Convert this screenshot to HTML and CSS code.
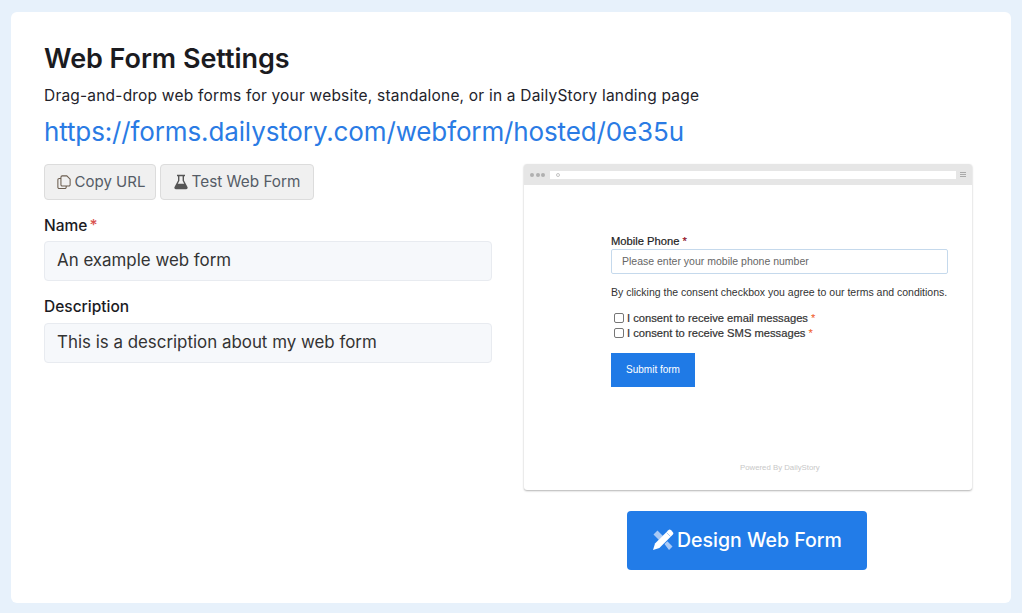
FILE: index.html
```html
<!DOCTYPE html>
<html lang="en">
<head>
<meta charset="utf-8">
<title>Web Form Settings</title>
<link rel="stylesheet" href="styles.css">
</head>
<body>
<main class="card">
  <h1 class="title">Web Form Settings</h1>
  <p class="subtitle">Drag-and-drop web forms for your website, standalone, or in a DailyStory landing page</p>
  <a class="url" href="#">https://forms.dailystory.com/webform/hosted/0e35u</a>
  <div class="columns">
    <section class="left">
      <div class="actions">
        <button class="btn btn-copy" type="button">
          <svg class="ico" viewBox="0 0 16 16" width="14" height="16"><path d="M6 1h5.200L15 4.800V11a1.500 1.500 0 0 1-1.500 1.500H6A1.500 1.500 0 0 1 4.500 11V2.500A1.500 1.500 0 0 1 6 1zM4.500 4H2.500A1.500 1.500 0 0 0 1 5.500V14a1.500 1.500 0 0 0 1.500 1.500H9A1.500 1.500 0 0 0 10.500 14v-1.500" fill="none" stroke="#6b5d4f" stroke-width="1.200"/></svg>
          Copy URL
        </button>
        <button class="btn btn-test" type="button">
          <svg class="ico" viewBox="0 0 14 16" width="14" height="16"><path d="M3 .8h8v1.400h-1v4.200l3.500 6.700c.5 1.100-.2 2.200-1.400 2.200H1.900C.7 15.300 0 14.200.5 13.100L4 6.400V2.200H3zM5.400 2.200v4.600L3.800 9.800h6.400L8.600 6.800V2.200z" fill="#555" fill-rule="evenodd"/></svg>
          Test Web Form
        </button>
      </div>
      <label class="field-label field-name">Name<span class="req">*</span></label>
      <input class="field" type="text" value="An example web form">
      <label class="field-label field-desc">Description</label>
      <input class="field" type="text" value="This is a description about my web form">
    </section>
    <section class="right">
      <div class="browser">
        <div class="chrome">
          <span class="dots"><i></i><i></i><i></i></span>
          <span class="address"><i class="ring"></i></span>
          <span class="menu"><i></i><i></i><i></i></span>
        </div>
        <div class="page">
          <div class="form">
            <div class="pf-label">Mobile Phone <span class="pf-req">*</span></div>
            <div class="pf-input">Please enter your mobile phone number</div>
            <p class="pf-text">By clicking the consent checkbox you agree to our terms and conditions.</p>
            <div class="pf-check"><span class="box"></span><span>I consent to receive email messages <span class="pf-star">*</span></span></div>
            <div class="pf-check"><span class="box"></span><span>I consent to receive SMS messages <span class="pf-star">*</span></span></div>
            <div class="pf-submit">Submit form</div>
          </div>
          <div class="powered">Powered By DailyStory</div>
        </div>
      </div>
      <button class="design" type="button">
        <svg viewBox="0 0 22 22" width="22" height="22">
          <path d="M1.500 5.500 5.500 1.500l5.500 5.500-4 4zM12.500 15l2.800-2.800 5.200 5.200-3.500 3.600z" fill="#a9c9f5"/>
          <path d="M16.300 1.300a2 2 0 0 1 2.800 0l1.600 1.600a2 2 0 0 1 0 2.800L7.400 19 1 21l2-6.400z" fill="#fff"/>
          <path d="M14.500 3.500l4 4" stroke="#a9c9f5" stroke-width="1"/>
        </svg>
        Design Web Form
      </button>
    </section>
  </div>
</main>
</body>
</html>
```
FILE: styles.css
```css
* { box-sizing: border-box; }
html, body { height: 100%; }
body {
  margin: 0;
  padding: 12px 11px 10px;
  background: #e7f1fb;
  font-family: Inter, "Noto Sans", sans-serif;
  overflow: hidden;
}
.card {
  height: 591px;
  background: #fff;
  border-radius: 6px;
  padding: 28px 39px 0 33px;
}
.title {
  margin: 0;
  font-size: 27px;
  line-height: 38px;
  font-weight: 600;
  color: #1b1b1f;
  letter-spacing: -.05px;
}
.subtitle {
  margin: 7px 0 0;
  font-size: 15.500px;
  line-height: 22px;
  letter-spacing: .2px;
  color: #23232b;
}
.url {
  display: block;
  margin-top: 6px;
  font-size: 26px;
  line-height: 38px;
  color: #2a7be4;
  text-decoration: none;
  letter-spacing: -.13px;
}
.columns { display: flex; gap: 32px; margin-top: 13px; }
.left, .right { width: 448px; }
.actions { display: flex; gap: 4px; }
.btn {
  display: flex;
  align-items: center;
  justify-content: center;
  gap: 4px;
  height: 36px;
  border: 1px solid #dcdcdc;
  border-radius: 4px;
  background: #f0f0f0;
  color: #555c66;
  font: 15.300px/34px Inter, "Noto Sans", sans-serif;
  padding: 0;
}
.btn-copy { width: 112px; font-size: 15px; padding-left: 2px; }
.btn-test { width: 154px; }
.field-label {
  display: block;
  font-size: 15.500px;
  line-height: 22px;
  font-weight: 500;
  color: #1b1b1f;
}
.field-name { margin: 15px 0 4px; }
.field-desc { margin: 15px 0 5px; }
.req { color: #d9534f; margin-left: 2px; }
.field {
  display: block;
  width: 100%;
  height: 40px;
  padding: 0 12px 2px;
  border: 1px solid #e8ebf0;
  border-radius: 4px;
  background: #f6f8fb;
  color: #333;
  font: 16.900px Inter, "Noto Sans", sans-serif;
}
.browser {
  height: 326px;
  border-radius: 3px;
  box-shadow: 0 1px 2px rgba(0,0,0,.3);
  overflow: hidden;
  background: #fff;
}
.chrome {
  display: flex;
  align-items: center;
  height: 21px;
  padding: 0 6px;
  background: #e6e6e6;
}
.dots { display: flex; gap: 1.500px; margin-right: 5px; }
.dots i { width: 4px; height: 4px; border-radius: 50%; background: #b0b0b0; }
.address {
  display: flex;
  align-items: center;
  flex: 1;
  height: 8px;
  padding-left: 6px;
  background: #fff;
}
.ring { width: 4px; height: 4px; border: 1px solid #c4c4c4; border-radius: 50%; }
.menu { display: flex; flex-direction: column; gap: 1px; width: 6px; margin-left: 4px; }
.menu i { height: 1px; background: #aaa; }
.page {
  display: flex;
  flex-direction: column;
  height: 305px;
  padding: 49px 24px 0 87px;
  font-family: "Liberation Sans", Arial, sans-serif;
}
.form { height: 228px; }
.pf-label { font-size: 11.200px; line-height: 14px; color: #222; -webkit-text-stroke: .2px #222; }
.pf-req { color: #e0002a; }
.pf-input {
  height: 25px;
  margin-top: 1px;
  padding-left: 10px;
  border: 1px solid #c5d9ec;
  border-radius: 2px;
  font-size: 10.500px;
  line-height: 23px;
  color: #666;
}
.pf-text { margin: 11px 0 11px; font-size: 10.500px; line-height: 14px; color: #333; white-space: nowrap; }
.pf-check {
  display: flex;
  align-items: center;
  gap: 3px;
  height: 15px;
  font-size: 11.200px;
  color: #333;
  -webkit-text-stroke: .2px #333;
  white-space: nowrap;
}
.pf-check .box {
  width: 10px;
  height: 10px;
  margin-left: 3px;
  border: 1px solid #767676;
  border-radius: 2px;
  background: #fff;
}
.pf-star { color: #f05a28; -webkit-text-stroke: 0; }
.pf-submit {
  width: 84px;
  height: 34px;
  margin-top: 13px;
  background: #1f7ae6;
  color: #fff;
  font-size: 10px;
  line-height: 33px;
  text-align: center;
}
.powered { margin-left: 129px; font-size: 7.800px; line-height: 12px; color: #c8c8c8; }
.design {
  display: flex;
  align-items: center;
  justify-content: center;
  gap: 3px;
  width: 240px;
  height: 59px;
  margin: 21px 0 0 103px;
  padding: 0 0 2px;
  border: 0;
  border-radius: 4px;
  background: #227ce8;
  color: #fff;
  font: 500 19.500px Inter, "Noto Sans", sans-serif;
}
```
